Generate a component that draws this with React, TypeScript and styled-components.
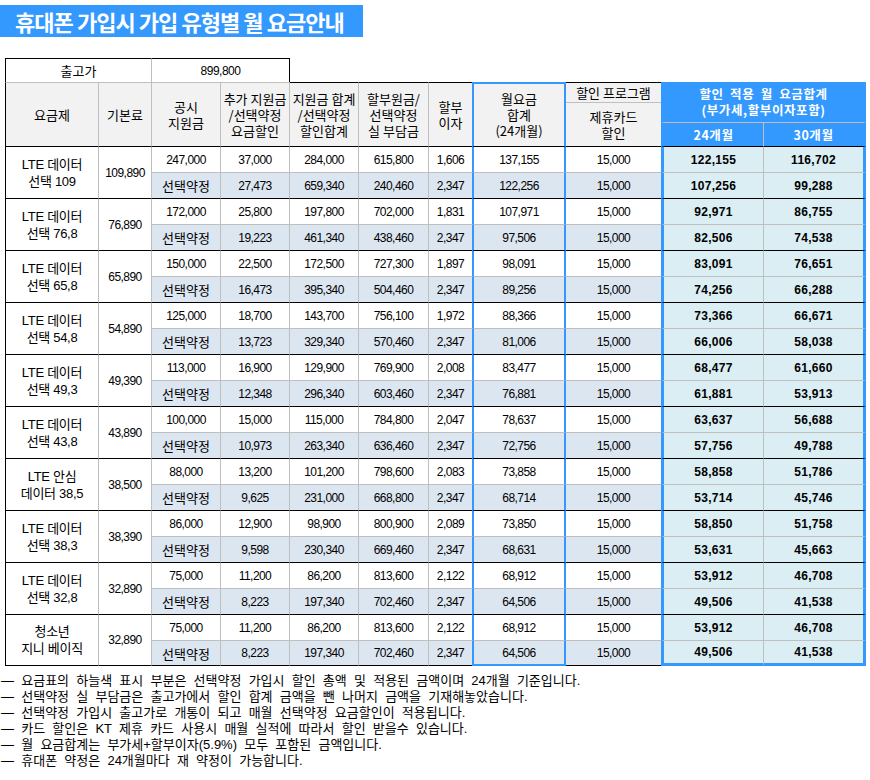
import React from "react";
import styled, { createGlobalStyle, css } from "styled-components";

const GRAY = "#bfbfbf";
const BLACK = "#000000";
const BLUE = "#3399ff";
const ALT = "#dce6f1";
const SKY = "#daeef3";
const HEAD = "#f2f2f2";

const line = (w: number, c: string) => `${w}px solid ${c}`;
const G1 = line(1, GRAY);
const K1 = line(1, BLACK);
const B2 = line(2, BLUE);
const B3 = line(3, BLUE);

const GlobalStyle = createGlobalStyle`
  html, body { margin: 0; padding: 0; background: #ffffff; }
  body {
    font-family: "Liberation Sans", "Noto Sans CJK KR", sans-serif;
    color: #000000;
  }
`;

const Page = styled.div`
  width: 870px;
  padding-top: 5px;
  display: flex;
  flex-direction: column;
`;

const TitleBar = styled.h1`
  margin: 0;
  width: 363px;
  height: 32px;
  box-sizing: border-box;
  padding-left: 15px;
  background: ${BLUE};
  color: #ffffff;
  font-family: "Noto Sans CJK KR", sans-serif;
  font-weight: 700;
  font-size: 22px;
  letter-spacing: -0.95px;
  display: flex;
  align-items: center;
`;

const Sheet = styled.div`
  margin: 21px 0 0 5px;
  display: grid;
  grid-template-columns: 94px 53px 69px 69px 69px 70px 43px 94px 95px 103px 102px;
  grid-template-rows: 24px 20px 20px 24px repeat(20, 26px);
`;

type CellProps = {
  $c: number;
  $r: number;
  $cs?: number;
  $rs?: number;
  $t?: string;
  $ri?: string;
  $b?: string;
  $l?: string;
};

const Cell = styled.div<CellProps>`
  grid-column: ${(p) => p.$c} / span ${(p) => p.$cs ?? 1};
  grid-row: ${(p) => p.$r} / span ${(p) => p.$rs ?? 1};
  box-sizing: border-box;
  display: flex;
  flex-direction: column;
  align-items: center;
  justify-content: center;
  text-align: center;
  white-space: nowrap;
  font-size: 12px;
  ${(p) => css`
    border-top: ${p.$t ?? "none"};
    border-right: ${p.$ri ?? "none"};
    border-bottom: ${p.$b ?? "none"};
    border-left: ${p.$l ?? "none"};
  `}
`;

const PriceCell = styled(Cell)`
  background: #ffffff;
  letter-spacing: -0.5px;
`;

const HeadCell = styled(Cell)`
  background: ${HEAD};
  font-size: 13px;
  line-height: 16px;
  font-family: "Noto Sans CJK KR", sans-serif;
`;

const BlueHead = styled(Cell)`
  background: ${BLUE};
  color: #ffffff;
  font-weight: 700;
  font-family: "Noto Sans CJK KR", sans-serif;
  font-size: 12.5px;
  line-height: 16px;
  letter-spacing: 0.6px;
  word-spacing: 3px;
`;

const PlanCell = styled(Cell)`
  background: #ffffff;
  font-size: 13px;
  line-height: 17px;
  letter-spacing: -0.3px;
`;

const BaseCell = styled(Cell)`
  background: #ffffff;
  letter-spacing: -0.55px;
`;

const DataCell = styled(Cell)<{ $alt?: boolean }>`
  background: ${(p) => (p.$alt ? ALT : "#ffffff")};
  letter-spacing: -0.55px;
`;

const Label = styled.span`
  font-family: "Noto Sans CJK KR", sans-serif;
  font-size: 13px;
  letter-spacing: 0;
`;

const SumCell = styled(Cell)`
  background: ${SKY};
  font-weight: 700;
  letter-spacing: 0.3px;
`;

const Notes = styled.ul`
  margin: 7px 0 0 1px;
  padding: 0;
  list-style: none;
  font-family: "Liberation Sans", "Noto Sans CJK KR", sans-serif;
  font-size: 13px;
  line-height: 16px;
  word-spacing: 3.6px;
`;

const Note = styled.li`
  margin: 0;
  white-space: nowrap;
`;

type Plan = {
  name: [string, string];
  base: string;
  a: string[];
  b: string[];
};

const plans: Plan[] = [
  {
    name: ["LTE 데이터", "선택 109"],
    base: "109,890",
    a: ["247,000", "37,000", "284,000", "615,800", "1,606", "137,155", "15,000", "122,155", "116,702"],
    b: ["선택약정", "27,473", "659,340", "240,460", "2,347", "122,256", "15,000", "107,256", "99,288"],
  },
  {
    name: ["LTE 데이터", "선택 76,8"],
    base: "76,890",
    a: ["172,000", "25,800", "197,800", "702,000", "1,831", "107,971", "15,000", "92,971", "86,755"],
    b: ["선택약정", "19,223", "461,340", "438,460", "2,347", "97,506", "15,000", "82,506", "74,538"],
  },
  {
    name: ["LTE 데이터", "선택 65,8"],
    base: "65,890",
    a: ["150,000", "22,500", "172,500", "727,300", "1,897", "98,091", "15,000", "83,091", "76,651"],
    b: ["선택약정", "16,473", "395,340", "504,460", "2,347", "89,256", "15,000", "74,256", "66,288"],
  },
  {
    name: ["LTE 데이터", "선택 54,8"],
    base: "54,890",
    a: ["125,000", "18,700", "143,700", "756,100", "1,972", "88,366", "15,000", "73,366", "66,671"],
    b: ["선택약정", "13,723", "329,340", "570,460", "2,347", "81,006", "15,000", "66,006", "58,038"],
  },
  {
    name: ["LTE 데이터", "선택 49,3"],
    base: "49,390",
    a: ["113,000", "16,900", "129,900", "769,900", "2,008", "83,477", "15,000", "68,477", "61,660"],
    b: ["선택약정", "12,348", "296,340", "603,460", "2,347", "76,881", "15,000", "61,881", "53,913"],
  },
  {
    name: ["LTE 데이터", "선택 43,8"],
    base: "43,890",
    a: ["100,000", "15,000", "115,000", "784,800", "2,047", "78,637", "15,000", "63,637", "56,688"],
    b: ["선택약정", "10,973", "263,340", "636,460", "2,347", "72,756", "15,000", "57,756", "49,788"],
  },
  {
    name: ["LTE 안심", "데이터 38,5"],
    base: "38,500",
    a: ["88,000", "13,200", "101,200", "798,600", "2,083", "73,858", "15,000", "58,858", "51,786"],
    b: ["선택약정", "9,625", "231,000", "668,800", "2,347", "68,714", "15,000", "53,714", "45,746"],
  },
  {
    name: ["LTE 데이터", "선택 38,3"],
    base: "38,390",
    a: ["86,000", "12,900", "98,900", "800,900", "2,089", "73,850", "15,000", "58,850", "51,758"],
    b: ["선택약정", "9,598", "230,340", "669,460", "2,347", "68,631", "15,000", "53,631", "45,663"],
  },
  {
    name: ["LTE 데이터", "선택 32,8"],
    base: "32,890",
    a: ["75,000", "11,200", "86,200", "813,600", "2,122", "68,912", "15,000", "53,912", "46,708"],
    b: ["선택약정", "8,223", "197,340", "702,460", "2,347", "64,506", "15,000", "49,506", "41,538"],
  },
  {
    name: ["청소년", "지니 베이직"],
    base: "32,890",
    a: ["75,000", "11,200", "86,200", "813,600", "2,122", "68,912", "15,000", "53,912", "46,708"],
    b: ["선택약정", "8,223", "197,340", "702,460", "2,347", "64,506", "15,000", "49,506", "41,538"],
  },
];

const notes = [
  "요금표의 하늘색 표시 부분은 선택약정 가입시 할인 총액 및 적용된 금액이며 24개월 기준입니다.",
  "선택약정 실 부담금은 출고가에서 할인 합계 금액을 뺀 나머지 금액을 기재해놓았습니다.",
  "선택약정 가입시 출고가로 개통이 되고 매월 선택약정 요금할인이 적용됩니다.",
  "카드 할인은 KT 제휴 카드 사용시 매월 실적에 따라서 할인 받을수 있습니다.",
  "월 요금합계는 부가세+할부이자(5.9%) 모두 포함된 금액입니다.",
  "휴대폰 약정은 24개월마다 재 약정이 가능합니다.",
];

const rightEdge = (c: number) => {
  if (c === 7 || c === 9) return undefined;
  if (c === 8) return B2;
  if (c === 11) return B3;
  return G1;
};
const leftEdge = (c: number) => {
  if (c === 8) return B2;
  if (c === 10) return B3;
  return undefined;
};
const bottomEdge = (c: number) => {
  if (c === 8) return B2;
  if (c === 10 || c === 11) return B3;
  return K1;
};

function Lines({ text }: { text: string[] }) {
  return (
    <>
      {text.map((t, i) => (
        <span key={i}>{t}</span>
      ))}
    </>
  );
}

const isKorean = (v: string) => /[가-힣]/.test(v);

function RowCells({ values, row, first, last }: { values: string[]; row: number; first: boolean; last: boolean }) {
  return (
    <>
      {values.map((v, i) => {
        const c = i + 3;
        const props = {
          $c: c,
          $r: row,
          $t: first ? K1 : G1,
          $ri: rightEdge(c),
          $l: leftEdge(c),
          $b: last ? bottomEdge(c) : undefined,
        };
        if (c >= 10) {
          return (
            <SumCell key={c} {...props}>
              {v}
            </SumCell>
          );
        }
        return (
          <DataCell key={c} $alt={!first} {...props}>
            {isKorean(v) ? <Label>{v}</Label> : v}
          </DataCell>
        );
      })}
    </>
  );
}

export default function App() {
  return (
    <>
      <GlobalStyle />
      <Page>
        <TitleBar>휴대폰 가입시 가입 유형별 월 요금안내</TitleBar>
        <Sheet>
          <PriceCell $c={1} $r={1} $cs={2} $l={K1} $t={K1} $ri={G1}>
            <Label>출고가</Label>
          </PriceCell>
          <PriceCell $c={3} $r={1} $cs={2} $t={K1} $ri={K1}>
            899,800
          </PriceCell>

          <HeadCell $c={1} $r={2} $rs={3} $l={K1} $t={G1} $ri={G1}>
            요금제
          </HeadCell>
          <HeadCell $c={2} $r={2} $rs={3} $t={G1} $ri={G1}>
            기본료
          </HeadCell>
          <HeadCell $c={3} $r={2} $rs={3} $t={G1} $ri={G1}>
            <Lines text={["공시", "지원금"]} />
          </HeadCell>
          <HeadCell $c={4} $r={2} $rs={3} $t={G1} $ri={G1}>
            <Lines text={["추가 지원금", "/선택약정", "요금할인"]} />
          </HeadCell>
          <HeadCell $c={5} $r={2} $rs={3} $t={K1} $ri={G1}>
            <Lines text={["지원금 합계", "/선택약정", "할인합계"]} />
          </HeadCell>
          <HeadCell $c={6} $r={2} $rs={3} $t={K1} $ri={G1}>
            <Lines text={["할부원금/", "선택약정", "실 부담금"]} />
          </HeadCell>
          <HeadCell $c={7} $r={2} $rs={3} $t={K1}>
            <Lines text={["할부", "이자"]} />
          </HeadCell>
          <HeadCell $c={8} $r={2} $rs={3} $t={B2} $l={B2} $ri={B2}>
            <Lines text={["월요금", "합계", "(24개월)"]} />
          </HeadCell>
          <HeadCell $c={9} $r={2} $t={K1}>
            할인 프로그램
          </HeadCell>
          <HeadCell $c={9} $r={3} $rs={2} $t={G1}>
            <Lines text={["제휴카드", "할인"]} />
          </HeadCell>
          <BlueHead $c={10} $r={2} $cs={2} $rs={2} $l={B3} $ri={B3}>
            <Lines text={["할인 적용 월 요금합계", "(부가세,할부이자포함)"]} />
          </BlueHead>
          <BlueHead $c={10} $r={4} $l={B3} $t={G1} $ri={G1}>
            24개월
          </BlueHead>
          <BlueHead $c={11} $r={4} $t={G1} $ri={B3}>
            30개월
          </BlueHead>

          {plans.map((p, i) => {
            const r = 5 + i * 2;
            const last = i === plans.length - 1;
            return (
              <React.Fragment key={i}>
                <PlanCell $c={1} $r={r} $rs={2} $l={K1} $t={K1} $ri={G1} $b={last ? K1 : undefined}>
                  <Lines text={p.name} />
                </PlanCell>
                <BaseCell $c={2} $r={r} $rs={2} $t={K1} $ri={G1} $b={last ? K1 : undefined}>
                  {p.base}
                </BaseCell>
                <RowCells values={p.a} row={r} first last={false} />
                <RowCells values={p.b} row={r + 1} first={false} last={last} />
              </React.Fragment>
            );
          })}
        </Sheet>
        <Notes>
          {notes.map((n, i) => (
            <Note key={i}>— {n}</Note>
          ))}
        </Notes>
      </Page>
    </>
  );
}
